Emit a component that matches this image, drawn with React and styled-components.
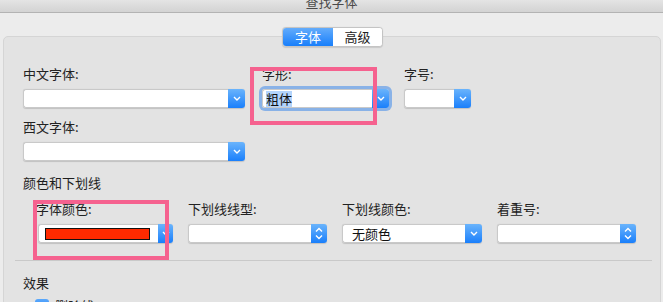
import React from "react";
import styled, { createGlobalStyle, css } from "styled-components";

const Global = createGlobalStyle`
  html, body { margin: 0; padding: 0; }
  body {
    background: #ececec;
    font-family: "Noto Sans CJK SC", "Noto Sans", sans-serif;
    color: #222;
    overflow: hidden;
  }
`;

const Window = styled.div`
  position: relative;
  width: 663px;
  height: 302px;
  overflow: hidden;
  background: #ececec;
  display: flex;
  flex-direction: column;
`;

const TitleBar = styled.div`
  height: 12px;
  flex: none;
  border-bottom: 1px solid #b3b3b3;
  background: linear-gradient(#e4e4e4, #d3d3d3);
  display: flex;
  justify-content: center;
  align-items: flex-end;
  overflow: hidden;
`;

const Title = styled.div`
  font-size: 13px;
  line-height: 13px;
  color: #4a4a4a;
  padding-bottom: 4px;
`;

const Content = styled.div`
  padding: 0 2px 0 3px;
  display: flex;
  flex-direction: column;
`;

const Tabs = styled.div`
  align-self: center;
  margin-top: 14px;
  margin-left: 1px;
  display: flex;
  height: 20px;
  box-sizing: border-box;
  border: 1px solid #c4c4c4;
  border-radius: 4px;
  overflow: hidden;
  background: #fff;
  position: relative;
  z-index: 2;
  box-shadow: 0 0.5px 1px rgba(0, 0, 0, 0.12);
`;

const Tab = styled.div`
  width: ${(p) => p.$w}px;
  display: flex;
  align-items: center;
  justify-content: center;
  font-size: 13px;
  line-height: 18px;
  ${(p) =>
    p.$active
      ? css`
          background: linear-gradient(#63acfb, #187ffb);
          color: #fff;
        `
      : css`
          background: #fff;
          color: #222;
        `}
`;

const Panel = styled.div`
  margin-top: -11px;
  height: 300px;
  background: #e3e3e3;
  border: 1px solid #d5d5d5;
  border-radius: 5px;
  padding: 29px 19px 0 19px;
  display: flex;
  flex-direction: column;
`;

const Grid = styled.div`
  display: grid;
  grid-template-columns: ${(p) => p.$cols};
  column-gap: ${(p) => p.$gap}px;
  row-gap: 11px;
  padding-left: ${(p) => p.$indent || 0}px;
  margin-top: ${(p) => p.$top || 0}px;
`;

const FieldWrap = styled.div`
  display: flex;
  flex-direction: column;
  grid-column: ${(p) => p.$span || "auto"};
  padding-left: ${(p) => p.$shift || 0}px;
`;

const Label = styled.div`
  font-size: 13px;
  line-height: 16px;
  height: 16px;
  margin-bottom: 7px;
  margin-left: ${(p) => p.$shift || 0}px;
  white-space: nowrap;
  color: #222;
`;

const Heading = styled.div`
  font-size: 13px;
  line-height: 16px;
  margin-top: ${(p) => p.$top}px;
  color: #1e1e1e;
`;

const SelectBox = styled.div`
  display: flex;
  height: 19px;
  width: ${(p) => (p.$w ? `${p.$w}px` : "100%")};
  border-radius: 3px;
  box-shadow: ${(p) =>
    p.$focus
      ? "0 0 0 3px rgba(98, 156, 232, 0.7)"
      : "0 0.5px 1px rgba(0,0,0,0.15)"};
`;

const FieldBody = styled.div`
  flex: 1;
  min-width: 0;
  background: #fff;
  border: 1px solid #c9c9c9;
  border-right: none;
  border-radius: 3px 0 0 3px;
  box-sizing: border-box;
  display: flex;
  align-items: center;
  padding-left: ${(p) => p.$pad || 0}px;
  font-size: 13px;
  line-height: 16px;
  color: #111;
`;

const Selected = styled.span`
  background: #b3d4fc;
  line-height: 16px;
`;

const Swatch = styled.div`
  width: 105px;
  height: 12px;
  box-sizing: border-box;
  background: #ff2a00;
  border: 1px solid #111;
`;

const Arrow = styled.div`
  width: ${(p) => p.$w || 17}px;
  flex: none;
  background: linear-gradient(#6ab4fc, #1a7ffb);
  border-radius: 0 3px 3px 0;
  display: flex;
  align-items: center;
  justify-content: center;
`;

const Divider = styled.div`
  height: 1px;
  background: #c9c9c9;
  margin: 17px -11px 0 -8px;
`;

const CheckRow = styled.div`
  display: flex;
  align-items: center;
  gap: 6px;
  margin-top: 7px;
  padding-left: 12px;
  font-size: 13px;
  line-height: 16px;
`;

const CheckBox = styled.div`
  width: 14px;
  height: 14px;
  border-radius: 3px;
  background: linear-gradient(#5aa8fb, #1b80fb);
`;

const Highlight = styled.div`
  position: absolute;
  left: ${(p) => p.$x}px;
  top: ${(p) => p.$y}px;
  width: ${(p) => p.$w}px;
  height: ${(p) => p.$h}px;
  box-sizing: border-box;
  border: 4px solid #f5628f;
  pointer-events: none;
  z-index: 5;
`;

const Down = () => (
  <svg width="8" height="5" viewBox="0 0 8 5">
    <path d="M1 1 L4 4 L7 1" fill="none" stroke="#fff" strokeWidth="1.4" />
  </svg>
);

const UpDown = () => (
  <svg width="8" height="13" viewBox="0 0 8 13">
    <path d="M1 4.5 L4 1.5 L7 4.5" fill="none" stroke="#fff" strokeWidth="1.4" />
    <path d="M1 8.5 L4 11.5 L7 8.5" fill="none" stroke="#fff" strokeWidth="1.4" />
  </svg>
);

const Select = ({ w, focus, pad, stepper, arrowW, children }) => (
  <SelectBox $w={w} $focus={focus}>
    <FieldBody $pad={pad}>{children}</FieldBody>
    <Arrow $w={arrowW}>{stepper ? <UpDown /> : <Down />}</Arrow>
  </SelectBox>
);

const Field = ({ label, span, shift, labelShift, children }) => (
  <FieldWrap $span={span} $shift={shift}>
    <Label $shift={labelShift}>{label}</Label>
    {children}
  </FieldWrap>
);

export default function App() {
  return (
    <>
      <Global />
      <Window>
        <TitleBar>
          <Title>查找字体</Title>
        </TitleBar>
        <Content>
          <Tabs>
            <Tab $active $w={50}>字体</Tab>
            <Tab $w={49}>高级</Tab>
          </Tabs>
          <Panel>
            <Grid $cols="222px 129px 67px" $gap={15}>
              <Field label="中文字体:">
                <Select />
              </Field>
              <Field label="字形:" shift={2}>
                <Select focus pad={3} w={127}>
                  <Selected>粗体</Selected>
                </Select>
              </Field>
              <Field label="字号:">
                <Select />
              </Field>
              <Field label="西文字体:" span="1 / 2">
                <Select />
              </Field>
            </Grid>
            <Heading $top={14}>颜色和下划线</Heading>
            <Grid $cols="135px 139px 140px 139px" $gap={15} $indent={15} $top={10}>
              <Field label="字体颜色:" labelShift={-2}>
                <Select pad={6} arrowW={15}>
                  <Swatch />
                </Select>
              </Field>
              <Field label="下划线线型:">
                <Select stepper arrowW={16} />
              </Field>
              <Field label="下划线颜色:">
                <Select pad={9}>无颜色</Select>
              </Field>
              <Field label="着重号:">
                <Select stepper arrowW={16} />
              </Field>
            </Grid>
            <Divider />
            <Heading $top={14}>效果</Heading>
            <CheckRow>
              <CheckBox />
              <span>删除线</span>
            </CheckRow>
          </Panel>
        </Content>
        <Highlight $x={250} $y={67} $w={127} $h={58} />
        <Highlight $x={33} $y={200} $w={136} $h={60} />
      </Window>
    </>
  );
}
